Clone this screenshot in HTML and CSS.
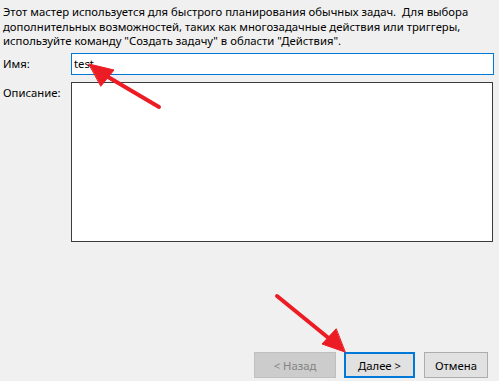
FILE: index.html
```html
<!doctype html>
<html lang="ru">
  <head>
    <meta charset="UTF-8" />
    <title>Мастер создания простой задачи</title>
    <link rel="stylesheet" href="styles.css">
  </head>
  <body>
    <div class="wizard">
      <p class="intro">
        Этот мастер используется для быстрого планирования обычных задач.&nbsp; Для выбора<br>
        дополнительных возможностей, таких как многозадачные действия или триггеры,<br>
        используйте команду "Создать задачу" в области "Действия".
      </p>

      <div class="form-row">
        <label for="task-name">Имя:</label>
        <div class="name-field" id="task-name">test</div>
      </div>

      <div class="form-row">
        <label for="task-desc">Описание:</label>
        <div class="desc-field" id="task-desc"></div>
      </div>

      <div class="buttons">
        <button class="btn btn-disabled" disabled>&lt; Назад</button>
        <button class="btn btn-default">Далее &gt;</button>
        <button class="btn">Отмена</button>
      </div>
    </div>

    <!-- Red annotation arrows -->
    <svg class="arrows" width="499" height="381" viewBox="0 0 499 381">
      <g stroke="#ec1c24" stroke-width="4" stroke-linecap="round" fill="#ec1c24">
        <line x1="159" y1="107" x2="103" y2="74" />
        <polygon points="89,64 114,70 101,86" stroke-width="1" stroke-linejoin="round" />
        <line x1="277" y1="296" x2="331" y2="340" />
        <polygon points="345,352 322,344 336,329" stroke-width="1" stroke-linejoin="round" />
      </g>
    </svg>
  </body>
</html>
```

FILE: styles.css
```css
* {
  margin: 0;
  padding: 0;
  box-sizing: border-box;
}

body {
  font-family: "Segoe UI", "Noto Sans", sans-serif;
  font-size: 11.3px;
  color: #000;
  background: #f0f0f0;
  width: 499px;
  height: 381px;
  overflow: hidden;
  position: relative;
}

.wizard {
  display: flex;
  flex-direction: column;
  height: 100%;
  padding: 5px 5px 3px 3px;
}

.intro {
  line-height: 14.5px;
  white-space: nowrap;
  margin-bottom: 4px;
}

.form-row {
  display: grid;
  grid-template-columns: 68px 1fr;
  margin-bottom: 7px;
}

.form-row label {
  padding-top: 3px;
}

.name-field {
  height: 22px;
  background: #fff;
  border: 1px solid #0078d7;
  padding: 2px 2px;
}

.desc-field {
  height: 160px;
  margin-right: 1px;
  background: #fff;
  border: 1px solid #3c3c3c;
}

.buttons {
  margin-top: auto;
  display: flex;
  justify-content: flex-end;
  padding-right: 6px;
}

.btn {
  font-family: inherit;
  font-size: 11.3px;
  height: 26px;
  width: 64px;
  margin-left: 9px;
  background: #e1e1e1;
  border: 1px solid #adadad;
  color: #000;
}

.btn-disabled {
  width: 82px;
  background: #cccccc;
  border-color: #bfbfbf;
  color: #838383;
}

.btn-default {
  width: 71px;
  margin-left: 8px;
  border: 2px solid #0078d7;
}

.arrows {
  position: absolute;
  top: 0;
  left: 0;
}
```
